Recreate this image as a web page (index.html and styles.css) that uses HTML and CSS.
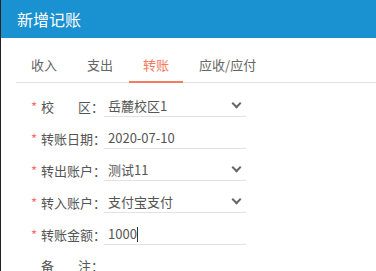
FILE: index.html
```html
<!DOCTYPE html>
<html lang="zh-CN">
<head>
    <meta charset="UTF-8">
    <meta name="viewport" content="width=device-width, initial-scale=1.0">
    <title>新增记账</title>
    <link rel="stylesheet" href="styles.css">
</head>
<body>
    <div class="dialog">
        <div class="dialog-header">新增记账</div>

        <div class="tabs">
            <span class="tab">收入</span>
            <span class="tab">支出</span>
            <span class="tab active">转账</span>
            <span class="tab">应收/应付</span>
        </div>

        <div class="form">
            <div class="form-row">
                <label class="form-label"><i class="star">*</i><span class="spread">校<b>区</b></span>：</label>
                <div class="form-input select">岳麓校区1</div>
            </div>
            <div class="form-row">
                <label class="form-label"><i class="star">*</i>转账日期：</label>
                <div class="form-input">2020-07-10</div>
            </div>
            <div class="form-row">
                <label class="form-label"><i class="star">*</i>转出账户：</label>
                <div class="form-input select">测试11</div>
            </div>
            <div class="form-row">
                <label class="form-label"><i class="star">*</i>转入账户：</label>
                <div class="form-input select">支付宝支付</div>
            </div>
            <div class="form-row">
                <label class="form-label"><i class="star">*</i>转账金额：</label>
                <div class="form-input">1000<span class="caret"></span></div>
            </div>
            <div class="form-row">
                <label class="form-label"><i class="star blank">*</i><span class="spread">备<b>注</b></span>：</label>
                <div class="form-input plain"></div>
            </div>
        </div>
    </div>
</body>
</html>
```

FILE: styles.css
```css
body {
    margin: 0;
    padding: 0;
    font-family: "Noto Sans CJK SC", "Liberation Sans", sans-serif;
    background-color: #fff;
    overflow: hidden;
}

.dialog {
    border-left: 1px solid #222; /* overlay edge */
    height: 271px;
    box-sizing: border-box;
}

.dialog-header {
    height: 38px;
    line-height: 38px;
    background-color: #1a91d0;
    color: #fff;
    font-size: 16px;
    padding-left: 16px;
}

.tabs {
    display: flex;
    gap: 2px;
    margin: 12px 0 0 15px;
    padding-left: 1px;
    border-bottom: 1px solid #e2e2e2;
}

.tab {
    padding: 0 14px;
    height: 33px;
    line-height: 30px;
    font-size: 13px;
    color: #666;
    box-sizing: border-box;
    border-bottom: 2px solid transparent;
    margin-bottom: -1px;
}

.tab.active {
    color: #f47a60;
    border-bottom-color: #f47a60;
}

.form {
    padding: 13px 0 0 26px;
}

.form-row {
    display: flex;
    align-items: flex-end;
    margin-bottom: 11px;
}

.form-label {
    flex: none;
    width: 77px;
    font-size: 13px;
    color: #555;
    line-height: 20px;
    white-space: nowrap;
    display: flex;
}

.star {
    flex: none;
    font-style: normal;
    color: #f56c6c;
    width: 14px;
    padding-left: 4px;
    box-sizing: border-box;
}

.star.blank {
    visibility: hidden;
}

.spread {
    display: flex;
    justify-content: space-between;
    width: 52px;
}

.spread b {
    font-weight: normal;
}

.form-input {
    position: relative;
    width: 138px;
    height: 20px;
    line-height: 20px;
    padding-left: 4px;
    box-sizing: content-box;
    border-bottom: 1px solid #e2e2e2;
    font-size: 13px;
    color: #555;
}

.form-input.plain {
    border-bottom: none;
}

.select::after {
    content: "";
    position: absolute;
    right: 6px;
    top: 4px;
    width: 5px;
    height: 5px;
    border-right: 2px solid #666;
    border-bottom: 2px solid #666;
    transform: rotate(45deg);
}

.caret {
    display: inline-block;
    width: 1px;
    height: 15px;
    background-color: #333;
    vertical-align: -3px;
}
```
